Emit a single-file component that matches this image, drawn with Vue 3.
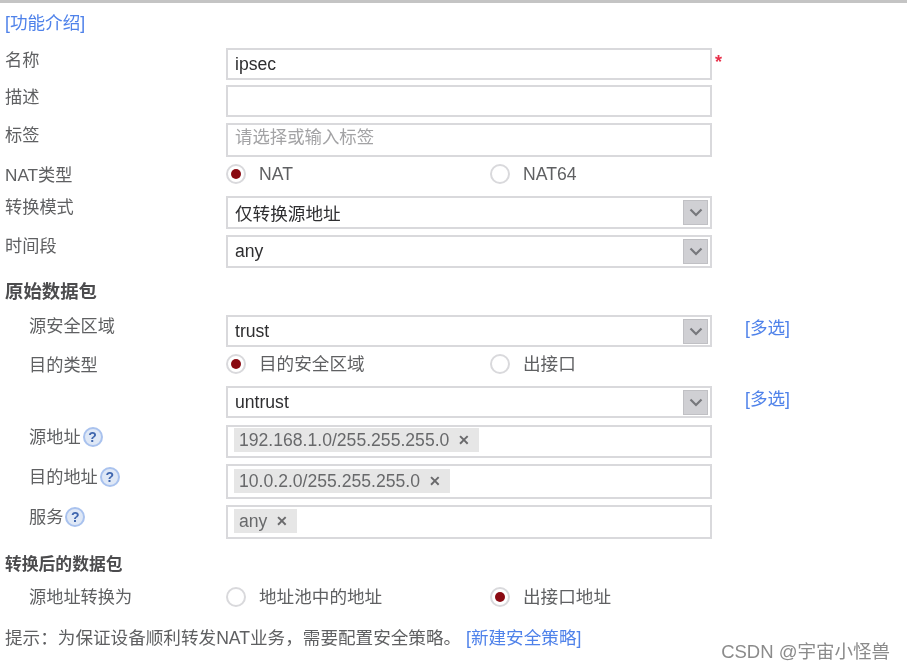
<template>
  <main class="page">
    <div class="top-line"></div>
    <div class="intro"><a class="link">[功能介绍]</a></div>

    <section class="form">
      <div class="row h32">
        <label class="label lift8">名称</label>
        <div class="box"><span class="value">ipsec</span></div>
        <span class="required">*</span>
      </div>
      <div class="row h32 mt5">
        <label class="label lift8">描述</label>
        <div class="box"></div>
      </div>
      <div class="row h34 mt6">
        <label class="label lift10">标签</label>
        <div class="box"><span class="placeholder">请选择或输入标签</span></div>
      </div>
      <div class="row radio-row">
        <label class="label lift4">NAT类型</label>
        <div class="radios">
          <span class="radio-item"><i class="radio on"></i>NAT</span>
          <span class="radio-item"><i class="radio"></i>NAT64</span>
        </div>
      </div>
      <div class="row h33">
        <label class="label lift12">转换模式</label>
        <div class="box select">
          <span class="value">仅转换源地址</span>
          <span class="arrow"><svg width="14" height="9" viewBox="0 0 14 9"><path d="M1.5 1.5 7 7l5.5-5.5" fill="none" stroke="#77787c" stroke-width="2.2"/></svg></span>
        </div>
      </div>
      <div class="row h33 mt6">
        <label class="label lift12">时间段</label>
        <div class="box select">
          <span class="value">any</span>
          <span class="arrow"><svg width="14" height="9" viewBox="0 0 14 9"><path d="M1.5 1.5 7 7l5.5-5.5" fill="none" stroke="#77787c" stroke-width="2.2"/></svg></span>
        </div>
      </div>

      <h3 class="heading first">原始数据包</h3>

      <div class="row h32">
        <label class="label sub lift10">源安全区域</label>
        <div class="box select">
          <span class="value">trust</span>
          <span class="arrow"><svg width="14" height="9" viewBox="0 0 14 9"><path d="M1.5 1.5 7 7l5.5-5.5" fill="none" stroke="#77787c" stroke-width="2.2"/></svg></span>
        </div>
        <a class="link extra">[多选]</a>
      </div>
      <div class="row radio-row">
        <label class="label sub lift4">目的类型</label>
        <div class="radios">
          <span class="radio-item"><i class="radio on"></i>目的安全区域</span>
          <span class="radio-item"><i class="radio"></i>出接口</span>
        </div>
      </div>
      <div class="row h32">
        <label class="label sub"></label>
        <div class="box select">
          <span class="value">untrust</span>
          <span class="arrow"><svg width="14" height="9" viewBox="0 0 14 9"><path d="M1.5 1.5 7 7l5.5-5.5" fill="none" stroke="#77787c" stroke-width="2.2"/></svg></span>
        </div>
        <a class="link extra">[多选]</a>
      </div>
      <div class="row h33 mt7">
        <label class="label sub lift10">源地址<i class="help">?</i></label>
        <div class="box tags"><span class="tag">192.168.1.0/255.255.255.0<b>✕</b></span></div>
      </div>
      <div class="row h35 mt6">
        <label class="label sub lift10">目的地址<i class="help">?</i></label>
        <div class="box tags low"><span class="tag">10.0.2.0/255.255.255.0<b>✕</b></span></div>
      </div>
      <div class="row h34 mt6">
        <label class="label sub lift10">服务<i class="help">?</i></label>
        <div class="box tags mid"><span class="tag short">any<b>✕</b></span></div>
      </div>

      <h3 class="heading second">转换后的数据包</h3>

      <div class="row radio-row last">
        <label class="label sub">源地址转换为</label>
        <div class="radios">
          <span class="radio-item"><i class="radio"></i>地址池中的地址</span>
          <span class="radio-item"><i class="radio on"></i>出接口地址</span>
        </div>
      </div>

      <p class="hint">提示：为保证设备顺利转发NAT业务，需要配置安全策略。 <a class="link">[新建安全策略]</a></p>
    </section>

    <div class="watermark">CSDN @宇宙小怪兽</div>
  </main>
</template>

<script setup>
</script>

<style>
html, body {
  margin: 0;
  background: #fff;
}
</style>

<style scoped>
.page {
  position: relative;
  width: 907px;
  height: 671px;
  overflow: hidden;
  background: #fff;
  color: #5f6062;
  font-family: "Liberation Sans", "Noto Sans CJK SC", sans-serif;
  font-size: 17.6px;
  filter: blur(0.6px);
}

.top-line {
  height: 3px;
  background: #c4c4c4;
}

.intro {
  height: 45px;
  padding: 10px 0 0 5px;
  box-sizing: border-box;
  line-height: 20px;
}

.link {
  color: #4f82ea;
}

.form {
  display: flex;
  flex-direction: column;
}

.row {
  display: flex;
  align-items: center;
}

.h32 { height: 32px; }
.h33 { height: 33px; }
.h34 { height: 34px; }
.h35 { height: 35px; }
.mt5 { margin-top: 5px; }
.mt6 { margin-top: 6px; }
.mt7 { margin-top: 7px; }

.label {
  display: flex;
  align-items: center;
  flex: none;
  width: 221px;
  margin-left: 5px;
  font-size: 17.2px;
  line-height: 22px;
  white-space: nowrap;
}

.label.lift4 { margin-top: -4px; }
.label.lift8 { margin-top: -8px; }
.label.lift10 { margin-top: -10px; }
.label.lift12 { margin-top: -12px; }

.label.sub {
  width: 197px;
  margin-left: 29px;
}

.box {
  position: relative;
  display: flex;
  align-items: center;
  flex: none;
  width: 486px;
  height: 100%;
  box-sizing: border-box;
  padding-left: 7px;
  border: 2px solid #d9d9dc;
  background: #fff;
}

.value {
  color: #2e2e30;
}

.placeholder {
  margin-top: -10px;
  color: #a3a3a5;
  font-size: 17.4px;
}

.required {
  margin: -5px 0 0 3px;
  color: #e8304a;
  font-size: 18px;
  font-weight: 700;
  line-height: 18px;
}

.radio-row {
  height: 39px;
}

.radio-row.last {
  height: 34px;
}

.radios {
  display: flex;
  flex: none;
  width: 486px;
}

.radio-item {
  display: flex;
  align-items: center;
  flex: none;
  width: 264px;
  margin-top: -6px;
  line-height: 22px;
}

.last .radio-item {
  margin-top: 0;
}

.radio {
  display: flex;
  align-items: center;
  justify-content: center;
  flex: none;
  width: 20px;
  height: 20px;
  margin-right: 13px;
  box-sizing: border-box;
  border: 2px solid #d9d9dc;
  border-radius: 50%;
  background: #fff;
}

.radio.on::after {
  content: "";
  width: 10px;
  height: 10px;
  border-radius: 50%;
  background: #8a0a12;
}

.arrow {
  position: absolute;
  top: 2px;
  right: 2px;
  display: flex;
  align-items: center;
  justify-content: center;
  width: 25px;
  height: 25px;
  box-sizing: border-box;
  border: 1px solid #c0c0c4;
  background: #d0d0d4;
}

.extra {
  margin-left: 33px;
  margin-top: -9px;
}

.tags {
  align-items: flex-start;
  padding-left: 6px;
  padding-top: 1px;
}

.tags.mid {
  padding-top: 2px;
}

.tags.low {
  padding-top: 3px;
}

.tag {
  display: flex;
  align-items: center;
  height: 24px;
  padding: 0 9px 0 5px;
  background: #e6e6e6;
  color: #68696b;
  white-space: nowrap;
}

.tag b {
  margin-left: 9px;
  color: #6a6a6c;
  font-size: 14px;
}

.help {
  display: flex;
  align-items: center;
  justify-content: center;
  width: 20px;
  height: 20px;
  margin-left: 2px;
  box-sizing: border-box;
  border: 2px solid #a9c2ee;
  border-radius: 50%;
  background: #dfe8f6;
  color: #3f66ae;
  font-size: 14px;
  font-style: normal;
  font-weight: 700;
}

.heading {
  margin: 0 0 0 5px;
  color: #4c4c4e;
  font-weight: 700;
  line-height: 22px;
}

.heading.first {
  padding: 13px 0 12px;
  font-size: 18.4px;
}

.heading.second {
  padding: 15px 0 4px;
  font-size: 16.8px;
}

.hint {
  margin: 13px 0 0 5px;
  line-height: 22px;
  white-space: nowrap;
}

.watermark {
  position: absolute;
  right: 17px;
  bottom: 7px;
  color: #8b8b8b;
  font-size: 18.5px;
  line-height: 24px;
}
</style>
